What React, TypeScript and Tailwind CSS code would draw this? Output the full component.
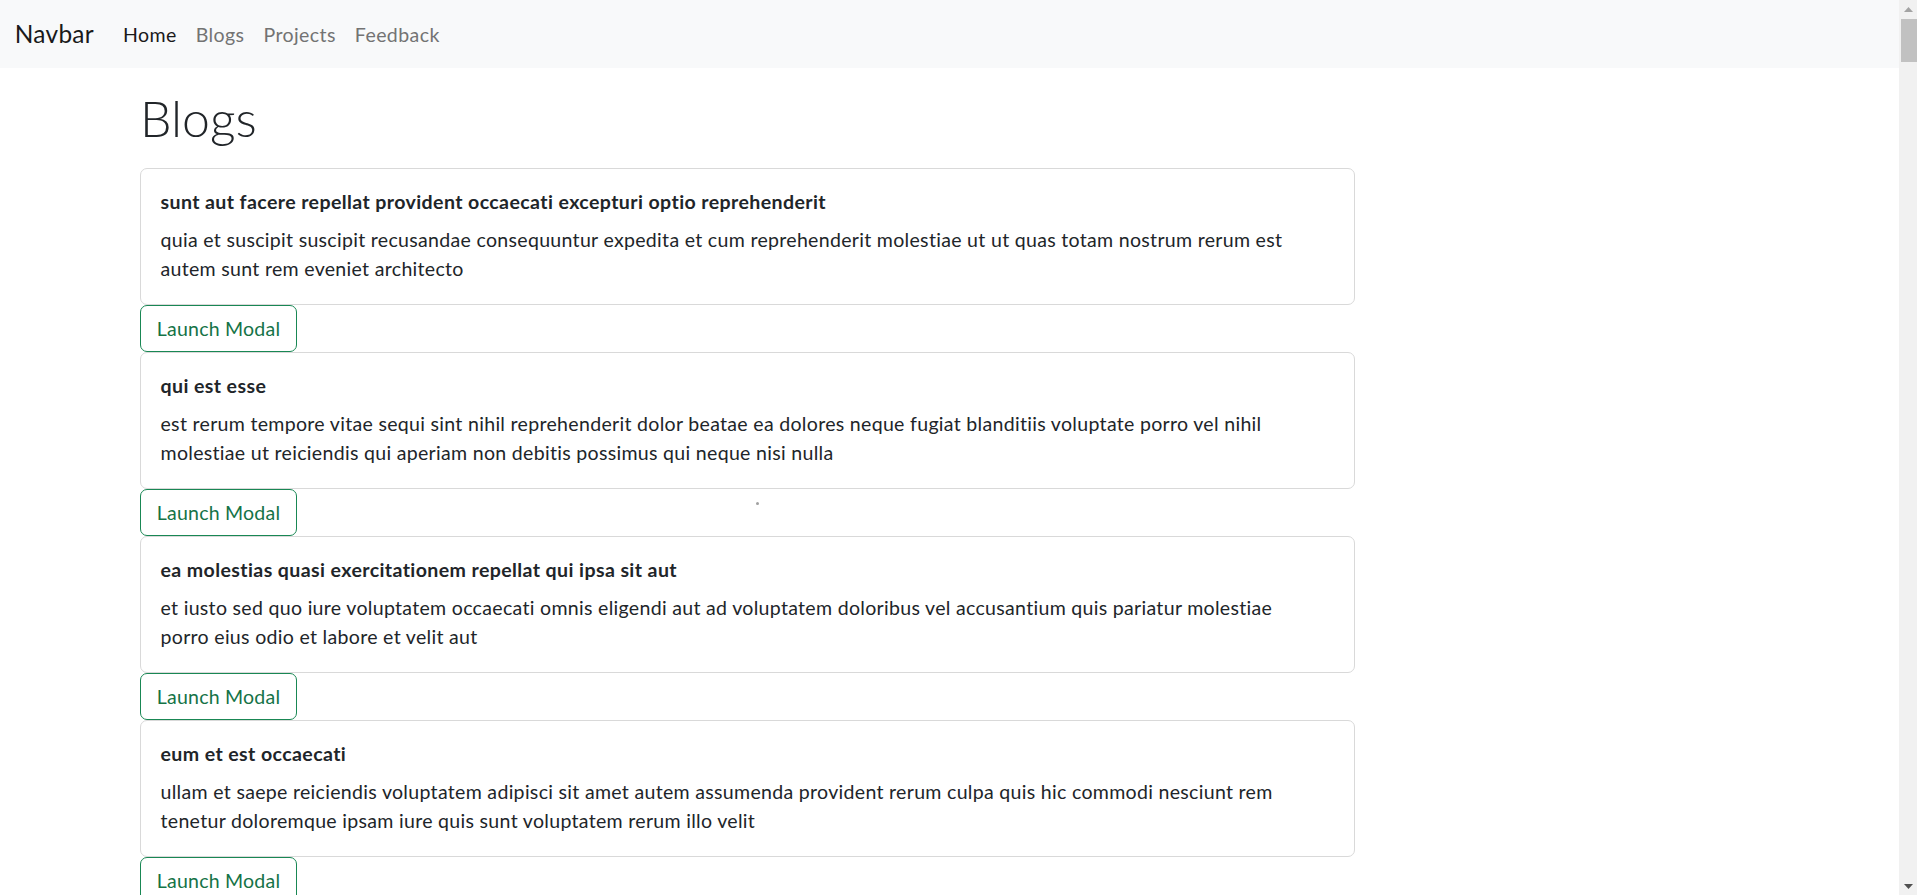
const posts = [
  {
    title: "sunt aut facere repellat provident occaecati excepturi optio reprehenderit",
    lines: [
      "quia et suscipit suscipit recusandae consequuntur expedita et cum reprehenderit molestiae ut ut quas totam nostrum rerum est",
      "autem sunt rem eveniet architecto",
    ],
  },
  {
    title: "qui est esse",
    lines: [
      "est rerum tempore vitae sequi sint nihil reprehenderit dolor beatae ea dolores neque fugiat blanditiis voluptate porro vel nihil",
      "molestiae ut reiciendis qui aperiam non debitis possimus qui neque nisi nulla",
    ],
  },
  {
    title: "ea molestias quasi exercitationem repellat qui ipsa sit aut",
    lines: [
      "et iusto sed quo iure voluptatem occaecati omnis eligendi aut ad voluptatem doloribus vel accusantium quis pariatur molestiae",
      "porro eius odio et labore et velit aut",
    ],
  },
  {
    title: "eum et est occaecati",
    lines: [
      "ullam et saepe reiciendis voluptatem adipisci sit amet autem assumenda provident rerum culpa quis hic commodi nesciunt rem",
      "tenetur doloremque ipsam iure quis sunt voluptatem rerum illo velit",
    ],
  },
];

const links = ["Home", "Blogs", "Projects", "Feedback"];

const App = () => {
  return (
    <div className="h-screen w-full flex overflow-hidden bg-white text-[#212529] font-['Lato',sans-serif]">
      <div className="relative flex-1 flex flex-col">
        {/* Navbar */}
        <nav className="h-[68px] shrink-0 bg-[#f8f9fa] flex items-center px-[14.7px]">
          <span className="text-[24.45px] leading-[36px] tracking-[0.3px] text-[#1a1a1a] mr-[19.5px]">Navbar</span>
          <div className="flex items-center">
            {links.map((l, i) => (
              <a key={l} href="#" className={`px-[9.5px] text-[19.56px] leading-[29px] tracking-[0.4px] ${i === 0 ? "text-[#1a1a1a]" : "text-[#737373]"}`}>
                {l}
              </a>
            ))}
          </div>
        </nav>

        {/* Content */}
        <div className="pl-[140px] w-[1355px]">
          <h1 className="mt-[20px] mb-[19px] text-[50px] leading-[61px] font-light text-[#212529]">Blogs</h1>

          {posts.map((p) => (
            <div key={p.title}>
              <div className="border border-[#d9d9d9] rounded-[7px] px-[19.5px] pt-[21px] pb-[21px]">
                <h5 className="text-[19.56px] leading-[23.5px] font-bold tracking-[0.4px] mb-[11px]">{p.title}</h5>
                <p className="text-[19.56px] leading-[29.3px] tracking-[0.3px]">
                  {p.lines[0]}
                  <br />
                  {p.lines[1]}
                </p>
              </div>
              <button className="w-[157px] h-[47px] border border-[#198754] rounded-[7px] text-[#157347] text-[19.56px] leading-[29.3px] tracking-[0.2px] flex items-center justify-center">
                Launch Modal
              </button>
            </div>
          ))}
        </div>

        <span className="absolute left-[756px] top-[502px] w-[3px] h-[3px] rounded-full bg-[#a0a0a0]" />
      </div>

      {/* Scrollbar */}
      <div className="w-[18px] shrink-0 bg-[#f1f1f1] flex flex-col items-end">
        <div className="w-full h-[19px] flex items-center justify-center">
          <svg width="9" height="5" viewBox="0 0 9 5">
            <path d="M0 5 L4.5 0 L9 5 Z" fill="#a3a3a3" />
          </svg>
        </div>
        <div className="w-[16px] h-[43px] bg-[#c1c1c1]" />
        <div className="flex-1" />
        <div className="w-full h-[17px] flex items-center justify-center">
          <svg width="9" height="5" viewBox="0 0 9 5">
            <path d="M0 0 L9 0 L4.5 5 Z" fill="#505050" />
          </svg>
        </div>
      </div>
    </div>
  );
};

export default App;
